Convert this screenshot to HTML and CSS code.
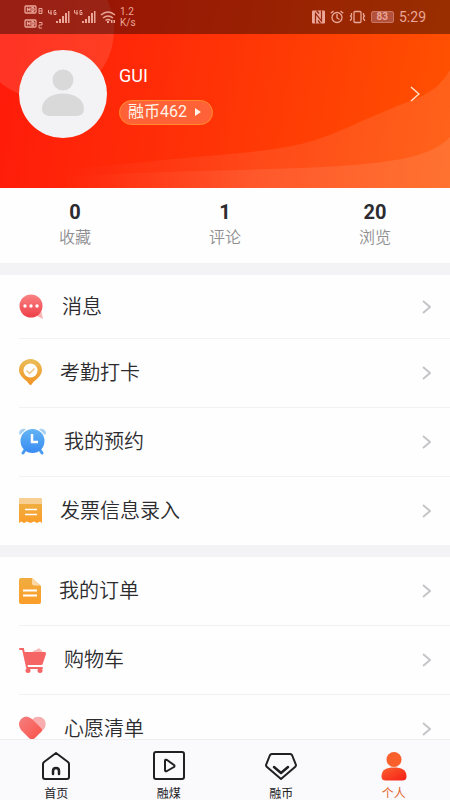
FILE: index.html
```html
<!DOCTYPE html>
<html lang="zh-CN">
<head>
<meta charset="utf-8">
<meta name="viewport" content="width=device-width, initial-scale=1">
<title>个人</title>
<link rel="stylesheet" href="styles.css">
</head>
<body>
<div class="app">
  <header class="hero">
    <svg class="hero-art" viewBox="0 0 450 188" preserveAspectRatio="none" aria-hidden="true">
      <defs>
        <linearGradient id="wave" gradientUnits="userSpaceOnUse" x1="60" x2="450" y1="0" y2="0"><stop offset="0" stop-color="#fff" stop-opacity="0"/><stop offset=".5" stop-color="#fff" stop-opacity=".08"/><stop offset="1" stop-color="#fff" stop-opacity=".1"/></linearGradient>
      </defs>
      <circle cx="45" cy="30" r="69" fill="#fff" fill-opacity=".11"/>
      <path d="M0 175C90 168 160 160 230 154C330 145 320 136 420 97Q440 88 450 70V188H0Z" fill="url(#wave)"/>
      <path d="M60 178C140 171 220 171 303 168C390 164 430 158 450 137V188H60Z" fill="url(#wave)"/>
    </svg>
    <div class="status">
      <div class="status-left">
        <svg width="20" height="26" viewBox="0 0 20 26" aria-hidden="true">
          <g fill="none" stroke="currentColor"><g stroke-width="1.300"><rect x="1" y="2" width="11" height="7" rx="1"/><rect x="1" y="16" width="11" height="7" rx="1"/><path d="M3.500 3.500v4M6 3.500v4M3.500 5.500H6M8 3.500v4h1l1-1V4.500l-1-1zM3.500 17.500v4M6 17.500v4M3.500 19.500H6M8 17.500v4h1l1-1v-2l-1-1z"/></g><path d="M15 4.500h3v5h-3zM15 7h3M15 18.500h3v2.500h-3v3h3"/></g>
        </svg>
        <svg width="22" height="16" viewBox="0 0 22 16" aria-hidden="true">
          <path d="M3 1v5M.5 1v3H4M8 1.500H6v4h2v-2H7" fill="none" stroke="currentColor"/>
          <path d="M8 12h2v2H8zM11 10h2v4h-2zM14 7h2v7h-2zM17 4h2v10h-2zM20 2h1.500v12H20z" fill="currentColor"/>
        </svg>
        <svg width="22" height="16" viewBox="0 0 22 16" aria-hidden="true">
          <path d="M3 1v5M.5 1v3H4M8 1.500H6v4h2v-2H7" fill="none" stroke="currentColor"/>
          <path d="M8 12h2v2H8zM11 10h2v4h-2zM14 7h2v7h-2zM17 4h2v10h-2zM20 2h1.500v12H20z" fill="currentColor"/>
        </svg>
        <svg width="16" height="14" viewBox="0 0 16 14" aria-hidden="true">
          <path d="M1 5Q8-1 15 5M3 8q5-4 10 0M5.500 10.500q2.500-2 5 0" fill="none" stroke="currentColor" stroke-width="1.500"/>
          <path d="M7 11h2v2H7zM11 10h1.500v3H11zM13.500 10H15v3h-1.500z" fill="currentColor"/>
        </svg>
        <span class="speed">1.2<br>K/s</span>
      </div>
      <div class="status-right">
        <svg width="13" height="14" viewBox="0 0 13 14" aria-hidden="true">
          <path d="M1 .5h11q1 0 1 1v11q0 1-1 1H1q-1 0-1-1v-11q0-1 1-1z" fill="currentColor"/>
          <path d="M3.500 13.500v-10l6 7.500V.5M4.500 .5l2.500 3M8.500 13.500l-2.500-3" fill="none" stroke="#9a2409" stroke-width="1.200"/>
        </svg>
        <svg width="14" height="14" viewBox="0 0 14 14" aria-hidden="true">
          <g fill="none" stroke="currentColor" stroke-width="1.300"><circle cx="7" cy="7.500" r="5"/><path d="M7 4v4l2.500 1.500M.8 3.300 3.500 1M13.200 3.300 10.500 1"/></g>
        </svg>
        <svg width="17" height="14" viewBox="0 0 17 14" aria-hidden="true">
          <g fill="none" stroke="currentColor" stroke-width="1.300"><rect x="5" y="1.500" width="7" height="11" rx="1"/><path d="M2.500 3v2l-1 1 1 1v2l-1 1v1M14.500 3v2l1 1-1 1v2l1 1v1"/></g>
        </svg>
        <span class="battery">83</span>
        <time class="clock">5:29</time>
      </div>
    </div>
    <div class="profile">
      <svg class="avatar" viewBox="0 0 88 88" role="img" aria-label="头像">
        <circle cx="44" cy="44" r="44" fill="#f3f3f5"/>
        <circle cx="44" cy="30" r="10.500" fill="#d9d9da"/>
        <path d="M23 59c0-10 10-15.500 21-15.500S65 49 65 59c0 5-4 7-8 7H31c-4 0-8-2-8-7z" fill="#d9d9da"/>
      </svg>
      <div class="who">
        <h1 class="name">GUI</h1>
        <button class="coins" type="button">融币462
          <svg width="6" height="8" viewBox="0 0 6 8" aria-hidden="true"><path d="M0 0l6 4-6 4z" fill="currentColor"/></svg>
        </button>
      </div>
      <a class="more" href="#" aria-label="个人资料">
        <svg width="10" height="16" viewBox="0 0 10 16" aria-hidden="true"><path d="M1 1l8 7-8 7" fill="none" stroke="#ffe3c8" stroke-width="1.500"/></svg>
      </a>
    </div>
  </header>

  <main class="content">
    <div class="stats">
      <a class="stat" href="#"><strong>0</strong><span>收藏</span></a>
      <a class="stat" href="#"><strong>1</strong><span>评论</span></a>
      <a class="stat" href="#"><strong>20</strong><span>浏览</span></a>
    </div>

    <nav class="menu">
      <a class="row first" href="#">
        <svg width="25" height="28" viewBox="0 0 25 28" aria-hidden="true">
          <defs><linearGradient id="red" x2="0" y2="1"><stop stop-color="#f98383"/><stop offset="1" stop-color="#ee3f48"/></linearGradient></defs>
          <path d="M16 22l6-5 2 9z" fill="#f9b5b5"/>
          <circle cx="12" cy="13" r="11.500" fill="url(#red)"/>
          <g fill="#fff"><circle cx="6" cy="13" r="1.700"/><circle cx="12" cy="13" r="1.700"/><circle cx="18" cy="13" r="1.700"/></g>
        </svg>
        <span>消息</span>
        <svg class="chevron" width="9" height="14" viewBox="0 0 9 14" aria-hidden="true"><path d="M1 1l7 6-7 6"/></svg>
      </a>
      <a class="row" href="#">
        <svg width="23" height="28" viewBox="0 0 23 28" aria-hidden="true">
          <defs><linearGradient id="gold" x2="0" y2="1"><stop stop-color="#e9bd58"/><stop offset="1" stop-color="#f39324"/></linearGradient></defs>
          <path d="M11.500 0C5 0 0 5 0 11c0 7 8 10 10 14q1.500 2 3 0c2-4 10-7 10-14C23 5 18 0 11.500 0z" fill="url(#gold)"/>
          <circle cx="11.500" cy="11.500" r="7" fill="#fff"/>
          <path d="M7.500 11.500l3 3 5-5" fill="none" stroke="#efc483" stroke-width="1.500"/>
        </svg>
        <span>考勤打卡</span>
        <svg class="chevron" width="9" height="14" viewBox="0 0 9 14" aria-hidden="true"><path d="M1 1l7 6-7 6"/></svg>
      </a>
      <a class="row" href="#">
        <svg width="27" height="28" viewBox="0 0 27 28" aria-hidden="true">
          <defs><linearGradient id="blue" x2="0" y2="1"><stop stop-color="#63b4f4"/><stop offset="1" stop-color="#388bf2"/></linearGradient></defs>
          <path d="M0 5q1-5 7-4L1 7zM27 5q-1-5-7-4l6 6z" fill="#a5d0f3"/>
          <path d="M6 22l-2 3M21 22l2 3" stroke="#4a9cf0" stroke-width="3" stroke-linecap="round"/>
          <circle cx="13.500" cy="13" r="12" fill="url(#blue)"/>
          <path d="M13 6v8h6" fill="none" stroke="#fff" stroke-width="2.500"/>
        </svg>
        <span>我的预约</span>
        <svg class="chevron" width="9" height="14" viewBox="0 0 9 14" aria-hidden="true"><path d="M1 1l7 6-7 6"/></svg>
      </a>
      <a class="row" href="#">
        <svg width="23" height="28" viewBox="0 0 23 28" aria-hidden="true">
          <defs><linearGradient id="orange" x2="0" y2="1"><stop stop-color="#f0ad40"/><stop offset="1" stop-color="#fb9d28"/></linearGradient></defs>
          <path d="M1 1h21q1 0 1 1v6H0V2q0-1 1-1z" fill="#f7cf92"/>
          <path d="M0 7h23v19l-2-1.500-3 1.500-3-1.500-3.500 1.500L8 24.500 5 26l-3-1.500L0 26z" fill="url(#orange)"/>
          <path d="M6 12.500h12M6 17.500h12" stroke="#fff" stroke-width="1.500"/>
        </svg>
        <span>发票信息录入</span>
        <svg class="chevron" width="9" height="14" viewBox="0 0 9 14" aria-hidden="true"><path d="M1 1l7 6-7 6"/></svg>
      </a>
    </nav>

    <nav class="menu">
      <a class="row" href="#">
        <svg width="22" height="28" viewBox="0 0 22 28" aria-hidden="true">
          <path d="M2 1h11l9 8v16q0 2-2 2H2q-2 0-2-2V3q0-2 2-2z" fill="url(#orange)"/>
          <path d="M13 1l8 7.500h-6q-2 0-2-2z" fill="#f9d9a8"/>
          <path d="M4 13.500h14M4 18.500h14" stroke="#fff" stroke-width="2"/>
        </svg>
        <span>我的订单</span>
        <svg class="chevron" width="9" height="14" viewBox="0 0 9 14" aria-hidden="true"><path d="M1 1l7 6-7 6"/></svg>
      </a>
      <a class="row" href="#">
        <svg width="27" height="28" viewBox="0 0 27 28" aria-hidden="true">
          <path d="M13 7q1-3 4-3l3-2 3 3 2 3z" fill="#f8b9b9"/>
          <path d="M5 6h21q1 0 1 2l-3 9q0 2-2 2H8z" fill="#f56565"/>
          <path d="M1 3h3l4 18q0 1 1 1h14" fill="none" stroke="#f56565" stroke-width="2" stroke-linecap="round"/>
          <circle cx="9" cy="24.500" r="2.500" fill="#f56565"/><circle cx="21" cy="24.500" r="2.500" fill="#f56565"/>
        </svg>
        <span>购物车</span>
        <svg class="chevron" width="9" height="14" viewBox="0 0 9 14" aria-hidden="true"><path d="M1 1l7 6-7 6"/></svg>
      </a>
      <a class="row" href="#">
        <svg width="27" height="28" viewBox="0 0 27 28" aria-hidden="true">
          <defs><linearGradient id="heart" x2="1" y2="1"><stop stop-color="#f58080"/><stop offset="1" stop-color="#fb5147"/></linearGradient></defs>
          <path d="M13 5q3-4 8-3c6 1 7 8 4 12l-4 4z" fill="#f8aeae"/>
          <path d="M2 4q5-5 11 0l9 9q2 2 0 4l-6 6q-3 3-6 0L2 15q-4-6 0-11z" fill="url(#heart)"/>
        </svg>
        <span>心愿清单</span>
        <svg class="chevron" width="9" height="14" viewBox="0 0 9 14" aria-hidden="true"><path d="M1 1l7 6-7 6"/></svg>
      </a>
    </nav>
  </main>

  <nav class="tabs">
    <a class="tab" href="#">
      <svg width="32" height="32" viewBox="0 0 32 32" aria-hidden="true"><g fill="none" stroke="#202024" stroke-width="2" stroke-linejoin="round" stroke-linecap="round"><path d="M16 3L4 12q-1 1-1 2v13q0 2 2 2h22q2 0 2-2V14q0-1-1-2z"/><path d="M13 24v-3q0-3 3-3t3 3v3" stroke-width="2.500"/></g></svg>
      <span>首页</span>
    </a>
    <a class="tab" href="#">
      <svg width="32" height="32" viewBox="0 0 32 32" aria-hidden="true"><g fill="none" stroke="#202024" stroke-width="2" stroke-linejoin="round"><rect x="1" y="2" width="30" height="27" rx="2"/><path d="M12 11q0-2 2-1l7 5q1 1 0 2l-7 4q-2 1-2-1z"/></g></svg>
      <span>融煤</span>
    </a>
    <a class="tab" href="#">
      <svg width="32" height="32" viewBox="0 0 32 32" aria-hidden="true"><g fill="none" stroke="#202024" stroke-width="2" stroke-linejoin="round" stroke-linecap="round"><path d="M7 4h18q1 0 2 1l4 10q0 1-1 2L16 29 2 17q-1-1-1-2L5 5q1-1 2-1z"/><path d="M9 17l7 6 7-6" stroke-width="2.500"/></g></svg>
      <span>融币</span>
    </a>
    <a class="tab active" href="#" aria-current="page">
      <svg width="32" height="32" viewBox="0 0 32 32" aria-hidden="true">
        <defs><linearGradient id="me" x2="1" y2="1"><stop stop-color="#fb6330"/><stop offset="1" stop-color="#f51d16"/></linearGradient></defs>
        <circle cx="16" cy="9.500" r="7.500" fill="#fa602c"/>
        <path d="M3.500 26.500c0-7 5-9 12.500-9s12.500 2 12.500 9c0 3-2 4-4 4h-17c-2 0-4-1-4-4z" fill="url(#me)"/>
      </svg>
      <span>个人</span>
    </a>
  </nav>
</div>
</body>
</html>
```
FILE: styles.css
```css
* {
  box-sizing: border-box;
}

body {
  margin: 0;
  font-family: Roboto, "Noto Sans CJK SC", sans-serif;
  color: #2c2c2f;
}

a {
  color: inherit;
  text-decoration: none;
}

svg {
  display: block;
  flex: none;
}

.app {
  display: flex;
  flex-direction: column;
  height: 100vh;
  background: #f3f2f5;
}

.hero {
  position: relative;
  flex: none;
  padding-bottom: 50px;
  background: linear-gradient(100deg, #ff1a0a, #ff3406 50%, #ff5200);
  color: #fff;
}

.hero-art {
  position: absolute;
  inset: 0;
  width: 100%;
  height: 100%;
}

.status {
  position: relative;
  display: flex;
  align-items: center;
  justify-content: space-between;
  height: 34px;
  padding: 0 24px;
  background: rgba(0, 0, 0, 0.4);
  color: #eaa698;
}

.status-left,
.status-right {
  display: flex;
  align-items: center;
  gap: 4px;
}

.status-right {
  gap: 5px;
}

.speed {
  font-size: 10px;
  line-height: 11px;
}

.battery {
  height: 12px;
  padding: 0 5px;
  border: 1px solid #c97563;
  border-radius: 2px;
  background: #b4513c;
  font-size: 10px;
  font-weight: 700;
  line-height: 10px;
}

.clock {
  font-size: 14px;
}

.profile {
  position: relative;
  display: flex;
  align-items: center;
  gap: 12px;
  padding: 16px 30px 0 19px;
}

.avatar {
  width: 88px;
  height: 88px;
}

.who {
  flex: 1;
}

.name {
  margin: 0 0 12px;
  font-size: 18px;
  font-weight: 400;
  line-height: 24px;
}

.coins {
  display: flex;
  align-items: center;
  gap: 8px;
  height: 25px;
  padding: 0 11px 0 8px;
  border: 1px solid #ff8a2c;
  border-radius: 13px;
  background: #ff6237;
  color: #fff3e8;
  font: inherit;
  font-size: 16px;
  line-height: 22px;
}

.content {
  flex: 1;
  min-height: 0;
  overflow: auto;
  scrollbar-width: none;
}

.stats {
  display: grid;
  grid-template-columns: repeat(3, 1fr);
  padding: 12px 0 13px;
  background: #fefefe;
}

.stat {
  display: flex;
  flex-direction: column;
  align-items: center;
  gap: 1px;
  color: #8f8f92;
  font-size: 16px;
  font-weight: 350;
  line-height: 25px;
}

.stat strong {
  color: #2c2c30;
  font-size: 20px;
  font-weight: 700;
  line-height: 24px;
}

.menu {
  margin-bottom: 12px;
  background: #fefefe;
}

.stats + .menu {
  margin-top: 12px;
}

.row {
  display: flex;
  align-items: center;
  gap: 18px;
  height: 69px;
  margin-left: 19px;
  padding-right: 19px;
  border-bottom: 1px solid #f2f1f4;
  font-size: 20px;
  font-weight: 350;
  line-height: 28px;
}

.row.first {
  height: 64px;
}

.row:last-child {
  height: 68px;
  border-bottom: 0;
}

.chevron {
  margin-left: auto;
  fill: none;
  stroke: #c6c6c9;
  stroke-width: 2;
}

.tabs {
  display: grid;
  grid-template-columns: repeat(4, 1fr);
  flex: none;
  height: 61px;
  padding-top: 10px;
  border-top: 1px solid #efeef2;
  background: #faf9fc;
}

.tab {
  display: flex;
  flex-direction: column;
  align-items: center;
  gap: 3px;
  font-size: 12px;
  line-height: 18px;
  color: #202024;
}

.tab.active {
  color: #e4652c;
}
```
